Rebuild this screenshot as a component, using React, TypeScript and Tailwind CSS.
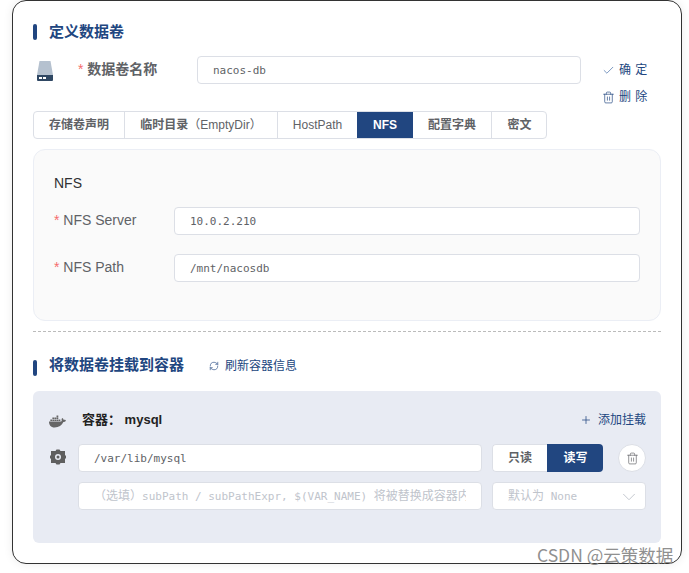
import { Check, ChevronDown, Plus, RefreshCw, Trash2 } from "lucide-react"
import { FaDocker } from "react-icons/fa"

const cjk = "font-['Liberation_Sans','Noto_Sans_CJK_SC',sans-serif]"
const mono = "font-['DejaVu_Sans_Mono','Noto_Sans_CJK_SC',monospace]"

const tabs = [
	{ label: "存储卷声明", width: "w-[90px]" },
	{ label: "临时目录", suffix: "（EmptyDir）", width: "w-[153px]" },
	{ label: "HostPath", width: "w-[80px]" },
	{ label: "NFS", width: "w-[56px]" },
	{ label: "配置字典", width: "w-[78px]" },
	{ label: "密文", width: "w-[56px]" },
]

const SectionBar = () => <span className="block h-4 w-1 rounded-sm bg-[#214680]" />

const DriveIcon = () => (
	<svg width="16" height="20" viewBox="0 0 16 20">
		<path d="M2.5 0h11L16 14H0z" fill="#b5c1cf" />
		<path d="M0 14h16v5a1 1 0 0 1-1 1H1a1 1 0 0 1-1-1z" fill="#2f4763" />
		<rect x="2" y="16" width="3" height="2" fill="#fff" />
		<rect x="6" y="16" width="3" height="2" fill="#fff" />
	</svg>
)

const GearIcon = () => (
	<svg width="16" height="16" viewBox="0 0 16 16">
		<path d="M1 2h4.5L6.500 0.500h3L10.500 2H15v4l1 1v2l-1 1v4h-4.500l-1 1.500h-3l-1-1.500H1v-4L0 9V7l1-1z" fill="#5f5f5f" />
		<circle cx="8" cy="8" r="3" fill="#e8ebf3" />
		<circle cx="8" cy="8" r="1.500" fill="#5f5f5f" />
	</svg>
)

const Field = ({ label, value }: { label: string; value: string }) => (
	<div className="flex items-center">
		<label className="-mt-0.5 w-[120px] text-sm leading-5 text-[#606266]">
			<span className="text-[#f56c6c]">*</span> {label}
		</label>
		<div className={`flex h-7 w-[466px] items-center rounded border border-[#dcdfe6] bg-white pl-[15px] pt-0.5 text-[11px] text-[#606266] ${mono}`}>
			{value}
		</div>
	</div>
)

const App = () => {
	return (
		<div className={`relative h-screen w-screen overflow-hidden bg-white ${cjk}`}>
			<div className="ml-3 h-[564px] w-[670px] rounded-[14px] border border-[#333] bg-white px-5 pt-[22px] shadow-[0_0_10px_rgba(0,0,0,0.08)]">
				<div className="flex h-[18px] items-center gap-3">
					<SectionBar />
					<h2 className="text-[15px] font-bold text-[#214680]">定义数据卷</h2>
				</div>

				<div className="mt-[15px] flex h-[55px] items-start">
					<div className="ml-1 mt-[5px] w-[41px]">
						<DriveIcon />
					</div>
					<div className="mt-[3px] w-[119px] text-sm font-bold text-[#606266]">
						<span className="font-normal text-[#f56c6c]">*</span> 数据卷名称
					</div>
					<div className={`flex h-7 w-[384px] items-center rounded border border-[#dcdfe6] bg-white pl-[15px] pt-0.5 text-[11px] text-[#606266] ${mono}`}>
						nacos-db
					</div>
					<div className="ml-[21px] flex flex-col gap-[11px] pt-1.5 text-xs leading-4 tracking-[0.5px] text-[#214680]">
						<span className="flex items-center gap-1">
							<Check size={13} strokeWidth={1.250} className="text-[#3f6aa5]" />确 定
						</span>
						<span className="flex items-center gap-1">
							<Trash2 size={13} strokeWidth={1.250} />删 除
						</span>
					</div>
				</div>

				<div className="flex h-7 w-[514px] overflow-hidden rounded border border-[#dcdfe6] bg-white">
					{tabs.map((tab, i) => (
						<div
							key={tab.label}
							className={`flex shrink-0 items-center justify-center text-xs ${tab.width} ${tab.label === "NFS" ? "-my-px bg-[#214680] font-bold text-white" : "text-[#606266]"} ${tab.label !== "HostPath" && tab.label !== "NFS" ? "font-bold" : ""} ${i > 0 && tab.label !== "NFS" && tab.label !== "配置字典" ? "border-l border-[#dcdfe6]" : ""}`}
						>
							{tab.label}
							{tab.suffix && <span className="font-normal">{tab.suffix}</span>}
						</div>
					))}
				</div>

				<div className="mt-[10px] h-[172px] rounded-xl border border-[#ebeef5] bg-[#fafafa] pl-5 pt-6">
					<div className="text-sm leading-[18px] text-[#303133]">NFS</div>
					<div className="mt-[15px] flex flex-col gap-[19px]">
						<Field label="NFS Server" value="10.0.2.210" />
						<Field label="NFS Path" value="/mnt/nacosdb" />
					</div>
				</div>

				<div className="mt-[10px] border-t border-dashed border-[#bbb]" />

				<div className="mt-[23px] flex h-[22px] items-start">
					<div className="mt-[5px]">
						<SectionBar />
					</div>
					<h2 className="ml-3 text-[15px] font-bold leading-5 text-[#214680]">将数据卷挂载到容器</h2>
					<span className="ml-[25px] mt-px flex items-center gap-[6px] text-xs leading-5 text-[#214680]">
						<RefreshCw size={10} strokeWidth={1.500} />刷新容器信息
					</span>
				</div>

				<div className="mt-[14px] h-[152px] rounded-md bg-[#e8ebf3] px-[15px] pt-[19px]">
					<div className="flex h-5 items-center">
						<FaDocker size={17} className="ml-px mt-0.5 text-[#666]" />
						<span className="ml-4 text-[13px] font-bold text-[#222]">容器： mysql</span>
						<span className="ml-auto flex items-center gap-1.5 text-xs text-[#214680]">
							<Plus size={12} strokeWidth={1.500} />添加挂载
						</span>
					</div>

					<div className="mt-[14px] flex items-start">
						<div className="ml-0.5 mt-[5px] w-[29px]">
							<GearIcon />
						</div>
						<div className="flex flex-col gap-2.5">
							<div className={`flex h-7 w-[404px] items-center rounded border border-[#dcdfe6] bg-white pl-[15px] pt-0.5 text-[11px] text-[#606266] ${mono}`}>
								/var/lib/mysql
							</div>
							<div className={`flex h-7 w-[404px] items-center rounded border border-[#dcdfe6] bg-white pl-[15px] pt-0.5 text-[11px] text-[#c0c4cc] ${mono}`}>
								<div className="w-[372px] overflow-hidden whitespace-pre">
									<span className="text-xs">（选填）</span>subPath / subPathExpr, $(VAR_NAME) <span className="text-xs">将被替换成容器内</span>
								</div>
							</div>
						</div>
						<div className="ml-2.5 flex flex-col gap-2.5">
							<div className="flex items-center gap-[15px]">
								<div className="flex h-7 w-[111px] overflow-hidden rounded text-xs font-bold">
									<span className="flex w-[55px] items-center justify-center rounded-l border border-r-0 border-[#dcdfe6] bg-white text-[#606266]">只读</span>
									<span className="flex w-[56px] items-center justify-center bg-[#214680] pl-px text-white">读写</span>
								</div>
								<span className="flex h-7 w-7 items-center justify-center rounded-full border border-[#dcdfe6] bg-white text-[#606266]">
									<Trash2 size={13} strokeWidth={1.250} />
								</span>
							</div>
							<div className={`flex h-7 w-[154px] items-center justify-between whitespace-pre rounded border border-[#dcdfe6] bg-white pl-[15px] pr-[5px] pt-0.5 text-[11px] text-[#c0c4cc] ${mono}`}>
								<span><span className="text-xs">默认为</span> None</span>
								<ChevronDown size={22} strokeWidth={1} />
							</div>
						</div>
					</div>
				</div>
			</div>

			<span className="absolute left-[537px] top-[543px] font-['Noto_Sans_CJK_SC',sans-serif] text-[17.5px] leading-6 text-[#909090]">CSDN @云策数据</span>
		</div>
	)
}

export default App
